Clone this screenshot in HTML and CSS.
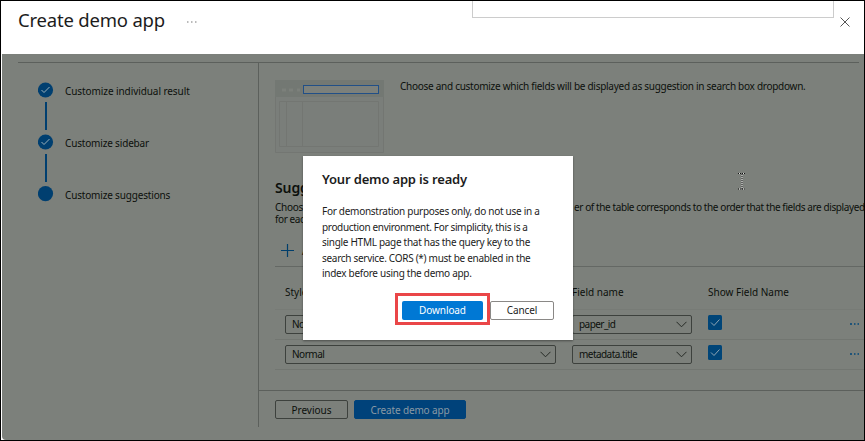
FILE: index.html
```html
<!DOCTYPE html>
<html lang="en">
<head>
<meta charset="utf-8">
<title>Create demo app</title>
<link rel="stylesheet" href="styles.css">
</head>
<body>
<div class="window">
  <header class="header">
    <h1>Create demo app</h1>
    <svg class="more" width="10" height="2" viewBox="0 0 10 2"><path d="M0 1h1.500M4 1h1.500M8 1h1.500" stroke="#777"/></svg>
    <div class="flyout"></div>
    <svg class="close" width="10" height="10" viewBox="0 0 10 10"><path d="M.5.5l9 9M9.500.5l-9 9" stroke="#555" fill="none"/></svg>
  </header>
  <main class="main">
    <nav class="steps">
      <div class="step"><svg width="16" height="16" viewBox="0 0 16 16"><circle cx="7.500" cy="8" r="7.600"/><path d="M3.500 8l2.500 2.500L11.500 5"/></svg><span class="s1">Customize individual result</span></div>
      <div class="link"></div>
      <div class="step"><svg width="16" height="16" viewBox="0 0 16 16"><circle cx="7.500" cy="8" r="7.600"/><path d="M3.500 8l2.500 2.500L11.500 5"/></svg><span>Customize sidebar</span></div>
      <div class="link"></div>
      <div class="step"><svg width="16" height="16" viewBox="0 0 16 16"><circle cx="7.500" cy="7.600" r="7.600"/></svg><span>Customize suggestions</span></div>
    </nav>
    <section class="content">
      <div class="intro">
        <svg width="109" height="73" viewBox="0 0 109 73">
          <rect width="109" height="73" fill="#7a7e7a"/>
          <rect width="109" height="17" fill="#737873"/>
          <path d="M.5 17v55.500h108V17M4.500 21.500h99v45h-99zM11.500 22v44M27.500 22v44" fill="none" stroke="#737672"/>
          <path d="M7 10h4M14 10h4M22 10h3" stroke="#7c807b" stroke-width="3"/>
          <rect x="28.500" y="5.500" width="75" height="8" fill="#7c807b" stroke="#214f87"/>
        </svg>
        <p>Choose and customize which fields will be displayed as suggestion in search box dropdown.</p>
      </div>
      <h2>Suggestions</h2>
      <p class="desc"><span class="lead">Choose and customize which fields to show. The ord</span>er of the table corresponds to the order that the fields are displayed<br>for each suggestion.</p>
      <div class="add"><svg width="13" height="13" viewBox="0 0 13 13"><path d="M6.500 0v13M0 6.500h13" stroke="#003e6b" stroke-width="1.200"/></svg><span>Add</span></div>
      <div class="table">
        <div class="row head"><span>Style</span><span>Field name</span><span class="show">Show Field Name</span></div>
        <div class="row">
          <div class="select style">Normal<svg width="11" height="7" viewBox="0 0 11 7"><path d="M.5.8l5 5 5-5"/></svg></div>
          <div class="select field">paper_id<svg width="11" height="7" viewBox="0 0 11 7"><path d="M.5.8l5 5 5-5"/></svg></div>
          <svg class="check" width="14" height="15" viewBox="0 0 14 15"><rect width="14" height="15" rx="1.500"/><path d="M3 7.500l3 3 5.500-6"/></svg>
          <svg class="dots" width="10" height="2" viewBox="0 0 10 2"><path d="M0 1h2M4 1h1.500M7.500 1h1.500"/></svg>
        </div>
        <div class="row">
          <div class="select style">Normal<svg width="11" height="7" viewBox="0 0 11 7"><path d="M.5.8l5 5 5-5"/></svg></div>
          <div class="select field">metadata.title<svg width="11" height="7" viewBox="0 0 11 7"><path d="M.5.8l5 5 5-5"/></svg></div>
          <svg class="check" width="14" height="15" viewBox="0 0 14 15"><rect width="14" height="15" rx="1.500"/><path d="M3 7.500l3 3 5.500-6"/></svg>
          <svg class="dots" width="10" height="2" viewBox="0 0 10 2"><path d="M0 1h2M4 1h1.500M7.500 1h1.500"/></svg>
        </div>
      </div>
      <footer class="footer"><div class="btn prev">Previous</div><div class="btn create">Create demo app</div></footer>
    </section>
  </main>
  <svg class="cursor" width="8" height="17" viewBox="0 0 8 17"><path d="M1 .5h2M5 .5h2M4 1v15M1 16h2M5 16h2" stroke="#ddd" fill="none"/><path d="M0 .5h8M4 1v15M0 16h8" stroke="#111" stroke-dasharray="1 1" fill="none"/></svg>
  <div class="modal">
    <h3>Your demo app is ready</h3>
    <p><span class="m1">For demonstration purposes only, do not use in a</span><br><span class="m2">production environment. For simplicity, this is a</span><br><span class="m3">single HTML page that has the query key to the</span><br><span class="m3">search service. CORS (*) must be enabled in the</span><br><span class="m1">index before using the demo app.</span></p>
    <div class="actions"><div class="ring"><div class="download">Download</div></div><div class="cancel">Cancel</div></div>
  </div>
</div>
</body>
</html>
```
FILE: styles.css
```css
* { box-sizing: border-box; }
body { margin: 0; font: 10px/12px "Noto Sans", "Open Sans", sans-serif; color: #0c100c; }
svg { display: block; flex: none; }
h1, h2, h3, p { margin: 0; }
.window { position: relative; width: 865px; height: 441px; border: 1px solid #000; background: #fff; overflow: hidden; white-space: nowrap; }
.header { height: 53px; display: flex; align-items: flex-start; padding-left: 17px; }
h1 { width: 169px; padding-top: 6px; font-size: 18.5px; line-height: 26px; font-weight: 400; letter-spacing: -.2px; color: #1c1c1c; }
.more { margin-top: 20px; }
.flyout { width: 362px; height: 17px; margin-left: 275px; border: 1px solid #ccc; border-top: 0; }
.close { margin: 16px 0 0 6px; }
.main { height: 386px; margin-left: 1px; background: #7c807b; border-bottom-left-radius: 4px; display: flex; padding-top: 8px; position: relative; }
.main::before { content: ""; position: absolute; top: 8px; left: 16px; right: 5px; height: 1px; background: #5c605c; }
.steps { width: 257px; height: 365px; border-right: 1px solid #5c605c; padding: 20px 0 0 36px; letter-spacing: -.17px; }
.s1 { letter-spacing: -.08px; }
.step { height: 16px; display: flex; align-items: center; gap: 11px; }
.step span { padding-top: 1px; }
.step circle { fill: #003f70; }
.step path { fill: none; stroke: #9aafb9; }
.link { width: 2px; height: 28px; margin: 4px 0 4px 7px; background: #003f70; }
.content { flex: 1; min-width: 0; overflow: hidden; }
.intro { margin: 18px 0 0 16px; display: flex; gap: 16px; height: 98px; letter-spacing: -.275px; }
h2 { font-size: 14px; line-height: 20px; font-weight: 600; letter-spacing: -.1px; margin-left: 16px; }
.desc { margin: 3px 0 0 16px; letter-spacing: -.4px; }
.lead { display: inline-block; width: 299px; overflow: hidden; vertical-align: top; letter-spacing: -.26px; }
.add { display: flex; align-items: center; gap: 8px; height: 21px; margin: 15px 0 0 22px; }
.table { margin: 5px 0 0 16px; border-top: 1px solid #646864; }
.row { height: 30px; display: grid; grid-template-columns: 271px 120px 14px 10px; column-gap: 16px; padding: 5px 0 0 10px; border-bottom: 1px solid #727671; }
.row .dots { margin: 8px 0 0 112px; }
.row.head { height: 43px; padding-top: 19px; border-bottom-color: #777b76; }
.select { height: 19px; border: 1px solid #3d413d; border-radius: 2px; display: flex; align-items: center; justify-content: space-between; padding: 0 4px 1px 6px; }
.style { letter-spacing: -.5px; }
.field { letter-spacing: -.55px; }
.select path { fill: none; stroke: #262a26; }
.check rect { fill: #004578; }
.check path { fill: none; stroke: #8fa6b4; }
.dots path { stroke: #00457a; stroke-width: 1.5; }
.footer { margin-top: 20px; border-top: 1px solid #5c605c; padding: 9px 0 0 16px; display: flex; gap: 6px; }
.btn { height: 19px; width: 73px; border: 1px solid #3d413d; border-radius: 2px; text-align: center; line-height: 18px; }
.create { width: 112px; background: #00427a; border-color: #00427a; color: #8999a4; letter-spacing: -.15px; }
.cursor { position: absolute; left: 737px; top: 172px; }
.modal { position: absolute; left: 302px; top: 155px; width: 270px; height: 184px; background: #fff; padding: 14px 0 0 19px; color: #1c1c1c; box-shadow: 0 1px 2px rgba(0,0,0,.4); }
h3 { font-size: 13px; line-height: 18px; font-weight: 600; letter-spacing: -.17px; }
.modal p { line-height: 15.5px; margin-top: 16px; }
.m1 { letter-spacing: -.28px; }
.m2 { letter-spacing: -.34px; }
.m3 { letter-spacing: -.29px; }
.actions { display: flex; margin: 11px 0 0 73px; align-items: flex-start; }
.ring { width: 95px; height: 32px; border: 3px solid #ea4648; padding: 5px 4px; }
.download { height: 19px; line-height: 19px; border-radius: 2px; background: #0078d4; color: #fff; text-align: center; letter-spacing: -.1px; }
.cancel { width: 64px; height: 19px; margin-top: 8px; border: 1px solid #8a8886; border-radius: 2px; text-align: center; line-height: 17px; letter-spacing: -.1px; }
```
